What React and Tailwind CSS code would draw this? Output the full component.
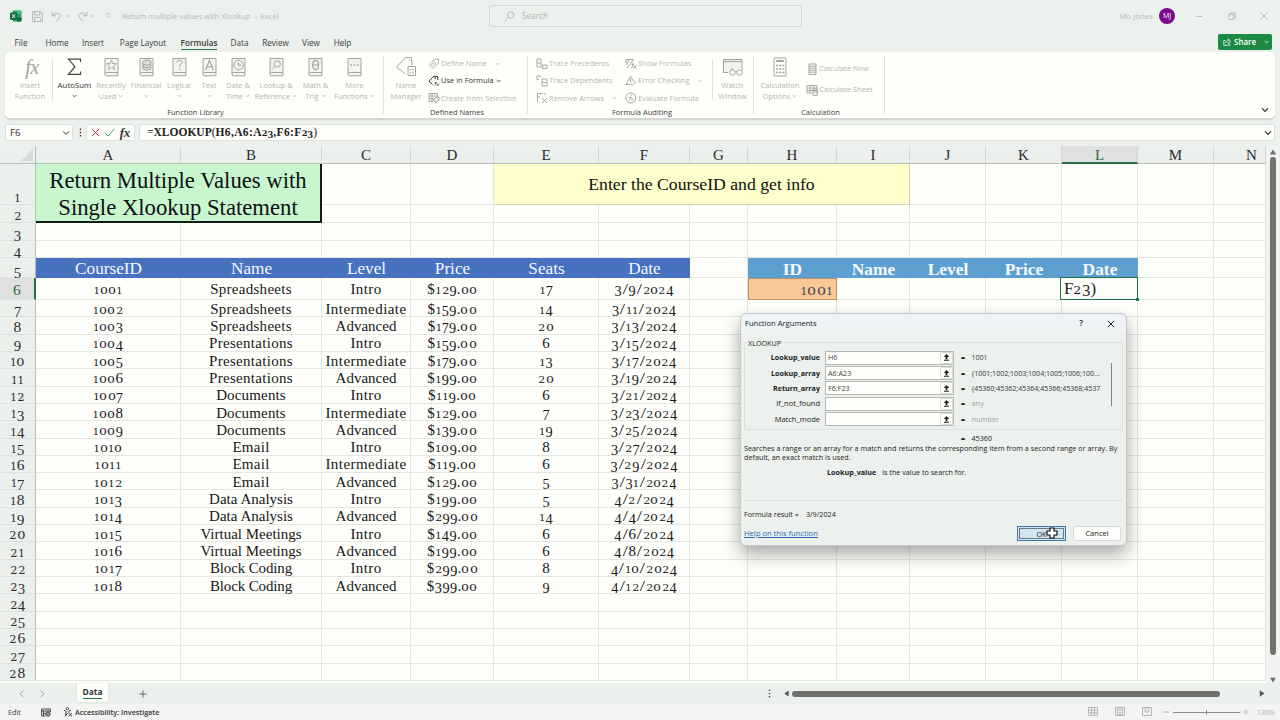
import React from "react";

const SERIF = "font-['Liberation_Serif',serif]";

/* ---------- old-style figures ---------- */
const FIGURES = {
  0: "w-[0.82em] text-[0.67em] scale-x-[1.25] font-['DejaVu_Serif',serif]",
  1: "w-[0.62em] text-[0.67em] font-['DejaVu_Serif',serif]",
  2: "w-[0.76em] text-[0.67em] scale-x-[1.1] font-['DejaVu_Serif',serif]",
  3: "w-[0.52em] text-[0.95em] align-[-0.17em]",
  4: "w-[0.54em] text-[0.95em] align-[-0.17em]",
  5: "w-[0.51em] text-[0.95em] align-[-0.17em]",
  6: "w-[0.53em]",
  7: "w-[0.49em] text-[0.95em] align-[-0.17em]",
  8: "w-[0.55em]",
  9: "w-[0.54em] text-[0.95em] align-[-0.17em]",
  "/": "w-[0.44em] scale-x-[1.25]",
  $: "w-[0.56em]",
};

function Old({ children }) {
  return (
    <span className="whitespace-pre">
      {String(children)
        .split("")
        .map((c, i) =>
          FIGURES[c] ? (
            <span key={i} className={"inline-block text-center leading-[0] " + FIGURES[c]}>
              {c}
            </span>
          ) : (
            c
          )
        )}
    </span>
  );
}

/* ---------- icons ---------- */
function Svg({ w, h, box, children, className = "" }) {
  return (
    <svg
      width={w}
      height={h}
      viewBox={box || `0 0 ${w} ${h}`}
      fill="none"
      stroke="currentColor"
      strokeWidth="1"
      className={"shrink-0 " + className}
    >
      {children}
    </svg>
  );
}

const Chev = ({ className = "" }) => (
  <Svg w={5} h={4} className={className}>
    <path d="M0.7 1 L2.5 2.8 L4.3 1" strokeWidth="0.9" />
  </Svg>
);

const Book = ({ children }) => (
  <Svg w={15} h={20}>
    <path d="M1 17 V1.5 H14 V15.5 H2.5 Q1 15.5 1 17 Q1 18.8 2.5 18.8 H14 V15.5" fill="#f3f3f1" />
    {children}
  </Svg>
);

const Tag = () => (
  <Svg w={12} h={12}>
    <path d="M1 6.5 L6.5 1.5 L10.5 1 L10.5 5 L5 10.5 Z M3 7 L7 3.3 M4.5 8.3 L8.3 4.7" strokeWidth="0.9" />
  </Svg>
);

/* ---------- ribbon pieces ---------- */
function Big({ w, icon, a, b, chev, dark }) {
  return (
    <div className={`flex h-[50px] flex-col items-center ${w} ${dark ? "text-[#333]" : "text-[#b4b5b1]"}`}>
      <div className={`flex h-[22px] items-center justify-center ${dark ? "text-[#444]" : "text-[#a3a4a1]"}`}>{icon}</div>
      <span className="mt-[2px] h-[10.5px] whitespace-nowrap leading-[11px]">{a}</span>
      <span className="flex h-[11px] items-center gap-[2px] whitespace-nowrap leading-[11px]">
        {b}
        {chev && <Chev />}
      </span>
    </div>
  );
}

function Small({ icon, children, chev, gap = "ml-[2px]", dark }) {
  return (
    <div className={`flex h-[17.4px] items-center whitespace-nowrap ${dark ? "text-[#333]" : "text-[#b4b5b1]"}`}>
      <span className={`flex w-[13px] ${dark ? "" : "text-[#a8a9a5]"}`}>{icon}</span>
      {children}
      {chev && <Chev className={gap} />}
    </div>
  );
}

function Group({ w, label, children }) {
  return (
    <div className={`relative flex shrink-0 flex-col ${w}`}>
      <div className="flex h-[55px] pt-[4px]">{children}</div>
      <div className="pl-[2px] text-center leading-[11px] text-[#3c3c3c]">{label}</div>
      <div className="absolute right-0 top-[4px] h-[58px] w-px bg-[#dfe1dd]" />
    </div>
  );
}

const Rule = () => <div className="mt-[3px] h-[41px] w-px bg-[#dfe1dd]" />;

function Ribbon() {
  return (
    <div className="ml-[5px] mr-[5px] flex h-[67px] shrink-0 rounded-[5px] border-b border-[#d3d6d2] bg-[#fefffb] text-[7.5px] shadow-[0_1px_1px_rgba(0,0,0,0.12)]">
      <Group w="w-[379px]" label="Function Library">
        <Big
          w="w-[47px] pl-[3px]"
          icon={<span className={`${SERIF} pl-1 text-[20px] italic leading-[20px] tracking-tight`}>fx</span>}
          a="Insert"
          b="Function"
        />
        <Rule />
        <Big
          w="ml-[3px] w-[37px]"
          dark
          icon={
            <Svg w={15} h={20}>
              <path d="M13.5 5 V2.2 H1.5 L8 9.7 L1.5 17.3 H13.5 V14.5" strokeWidth="1.2" />
            </Svg>
          }
          a={<span className="text-[7.9px]">AutoSum</span>}
          chev
        />
        <Big w="w-[36px]" icon={<Book><path d="M7.5 3 L8.8 6.5 L12.5 6.7 L9.6 9 L10.7 12.6 L7.5 10.5 L4.4 12.6 L5.5 9 L2.6 6.7 L6.3 6.5 Z" strokeWidth="0.9" /></Book>} a="Recently" b="Used" chev />
        <Big w="w-[34px]" icon={<Book><ellipse cx="7.8" cy="4.6" rx="4" ry="1.5" fill="#d4d4d1" /><path d="M3.8 4.4 V12 Q7.8 14.5 11.8 12 V4.4 M3.8 7 Q7.8 9.5 11.8 7 M3.8 9.6 Q7.8 12 11.8 9.6" fill="#dededb" /></Book>} a="Financial" chev />
        <Big w="w-[32px]" icon={<Book><path d="M5 5.5 Q5.2 3.2 7.6 3.2 Q10.2 3.3 10 5.5 Q9.8 7 7.7 8.3 V10.2 M7.7 11.6 V13" /></Book>} a="Logical" chev />
        <Big w="w-[28px]" icon={<Book><path d="M3.6 13 L7.5 3.3 L11.4 13 M5 9.7 H10" strokeWidth="1.1" /></Book>} a="Text" chev />
        <Big w="w-[30px]" icon={<Book><circle cx="7.6" cy="8" r="4.8" /><path d="M7.3 5 V8.2 H10.3" /></Book>} a="Date &amp;" b="Time" chev />
        <Big w="w-[46px]" icon={<Book><circle cx="8.2" cy="7" r="3.2" /><path d="M6 9.4 L2.8 12.6" /></Book>} a="Lookup &amp;" b="Reference" chev />
        <Big w="w-[33px]" icon={<Book><ellipse cx="7.6" cy="8" rx="2.9" ry="4.6" strokeWidth="1.2" /><path d="M4.9 8 H10.3" strokeWidth="1.1" /></Book>} a="Math &amp;" b="Trig" chev />
        <Big w="w-[45px]" icon={<Book><path d="M3.4 8 h1.6 M6.8 8 h1.6 M10.2 8 h1.6" strokeWidth="1.6" /></Book>} a="More" b="Functions" chev />
      </Group>
      <Group w="w-[144px]" label="Defined Names">
        <Big
          w="w-[44px]"
          icon={
            <Svg w={22} h={22}>
              <path d="M10.5 18 L1.5 11 L10.5 1.5 L16.5 1.5 L17 9" />
              <path d="M14 4 h1" />
              <path d="M13 10.5 h7.5 v9 h-7.5 z M14.5 13.5 h1.5 m1 0 h2 M14.5 16.8 h1.5 m1 0 h2" fill="#fff" />
            </Svg>
          }
          a="Name"
          b="Manager"
        />
        <div className="-mt-[1px] flex flex-col">
          <Small icon={<Tag />} chev gap="ml-[8px]">Define Name</Small>
          <Small dark chev icon={
            <Svg w={12} h={12}>
              <path d="M4.5 9.5 L1 6.2 L5.8 1.2 L9.5 1.5 L9.8 5" />
              <path d="M7.2 1.8 V4" />
              <path d="M6.5 10.5 Q7.5 10.5 8 7 M6.8 7.8 H9 M9 8.5 L11 10.8 M11 8.5 L9 10.8" strokeWidth="0.7" />
            </Svg>
          }>Use in Formula</Small>
          <Small icon={
            <Svg w={12} h={12}>
              <path d="M1 1.5 H9.5 V5 M1 1.5 V9.5 H5 M1 4 H9.5 M1 6.7 H6 M4 1.5 V9" />
              <path d="M5 8 L8 5 H11 V8 L8 11 Z" fill="#e8e8e5" />
            </Svg>
          }>Create from Selection</Small>
        </div>
      </Group>
      <Group w="w-[226px]" label="Formula Auditing">
        <div className="-mt-[1px] ml-[8px] flex w-[89px] flex-col">
          <Small icon={<Svg w={12} h={12}><path d="M1 1 H5 V9 H1 Z M1 5 H5 M6.5 7 H11 V10.5 H6.5 Z" /></Svg>}>Trace Precedents</Small>
          <Small icon={<Svg w={12} h={12}><path d="M1 4.5 V1 H5.5 M1 4.5 H3 M6 4 H11 V11 H6 Z M6 7.5 H11" /></Svg>}>Trace Dependents</Small>
          <Small chev gap="ml-[8px]" icon={<Svg w={12} h={12}><path d="M1.5 10 V1.5 H7 M1.5 5 H4 M8 1 L10 3 M6 6 L11 11 M11 6 L6 11" /></Svg>}>Remove Arrows</Small>
        </div>
        <div className="-mt-[1px] flex w-[87px] flex-col">
          <Small icon={<Svg w={12} h={12}><path d="M1 5 V1.5 H8.5 L2 10 M4 2 L1.5 7 M6 10.5 Q7.8 10 8.3 4.5 M6.5 6.5 H9 M8.7 7.5 L11.3 10.5 M11.3 7.5 L8.7 10.5" /></Svg>}>Show Formulas</Small>
          <Small chev gap="ml-[8px]" icon={<Svg w={12} h={12}><path d="M1 9.5 L5.5 1.2 L9 7 M1 9.5 H5 M5.5 4 V7.5" /><path d="M5.5 8.5 L7.3 10.5 L11 6.5" /></Svg>}>Error Checking</Small>
          <Small icon={<Svg w={12} h={12}><circle cx="5.8" cy="6" r="5" /><path d="M3.2 9 Q5 8.5 5.3 5 Q5.5 3 7 3 M4 5.5 H6.5 M6 6.3 L8.6 8.6 M8.6 6.3 L6 8.6" strokeWidth="0.8" /></Svg>}>Evaluate Formula</Small>
        </div>
        <Rule />
        <Big
          w="w-[39px]"
          icon={
            <Svg w={22} h={20}>
              <path d="M6 15.5 H1.5 V2.5 H20 V11" fill="#f1f1ee" />
              <path d="M1.5 4.6 H20" />
              <circle cx="10.5" cy="15.5" r="2.7" fill="#fff" />
              <circle cx="17.5" cy="15.5" r="2.7" fill="#fff" />
              <path d="M13 14.8 H15 M8.5 13.5 L10.5 11 M19.5 13.5 L20.5 11" />
            </Svg>
          }
          a="Watch"
          b="Window"
        />
      </Group>
      <Group w="w-[131px]" label="Calculation">
        <Big
          w="ml-[3px] w-[46px]"
          icon={
            <Svg w={14} h={20}>
              <path d="M1 1 H13 V19 H1 Z" />
              <path d="M3.2 4 H10.8" strokeWidth="2" />
              <path d="M3 8.5 h2 m1.2 0 h2 m1.2 0 h2 M3 12 h2 m1.2 0 h2 m1.2 0 h2 M3 15.5 h2 m1.2 0 h2 m1.2 0 h2" strokeWidth="1.6" />
            </Svg>
          }
          a="Calculation"
          b="Options"
          chev
        />
        <div className="ml-[3px] mt-[4px] flex flex-col gap-[4px]">
          <Small icon={<Svg w={12} h={12}><path d="M3 1 H10 V11.5 H3 Z M3 3.2 H10 M3 5.2 H10 M3 7.2 H10 M3 9.2 H10" /></Svg>}>Calculate Now</Small>
          <Small icon={<Svg w={12} h={12}><path d="M1 1.5 H11 V9 M1 1.5 V9 H6 M1 4 H11 M1 6.5 H11 M4 1.5 V9 M7.5 1.5 V5 M7 5 H11.3 V11.3 H7 Z M7 8 H11" /></Svg>}>Calculate Sheet</Small>
        </div>
      </Group>
      <div className="flex flex-1 items-end justify-end pb-[5px] pr-[6px] text-[#333]">
        <Svg w={8} h={6}><path d="M1 1.3 L4 4.3 L7 1.3" strokeWidth="1.2" /></Svg>
      </div>
    </div>
  );
}

/* ---------- title bar and tabs ---------- */
function TitleBar() {
  return (
    <div className="flex h-[32px] shrink-0 items-center text-[7.9px] text-[#b5bab6]">
      <svg width="12" height="12" viewBox="0 0 12 12" className="ml-[10px] shrink-0">
        <rect x="2.5" y="0.5" width="9" height="11" rx="1" fill="#21a366" />
        <path d="M7 0.5 H10.5 Q11.5 0.5 11.5 1.5 V4 H7 Z" fill="#4ac386" />
        <path d="M7 7.5 H11.5 V10.5 Q11.5 11.5 10.5 11.5 H7 Z" fill="#0f6b3c" />
        <rect x="0" y="2.5" width="7.2" height="7.2" rx="0.8" fill="#0c6a37" />
        <path d="M2 4.2 L5.2 8 M5.2 4.2 L2 8" stroke="#fff" strokeWidth="1" />
      </svg>
      <Svg w={11} h={11} className="ml-[10px]">
        <path d="M0.6 0.6 H9 L10.4 2 V10.4 H0.6 Z M2.6 0.6 V4 H8 V0.6 M2.6 10.4 V6.4 H8.4 V10.4" />
      </Svg>
      <Svg w={11} h={11} className="ml-[8px]">
        <path d="M1.2 0.8 V4.8 H5.2 M1.4 4.6 Q5 0.8 8 2.4 Q11 4.8 8 7.6 L5.2 10.2" />
      </Svg>
      <Chev className="ml-[3px]" />
      <Svg w={11} h={11} className="ml-[7px]">
        <path d="M9.8 0.8 V4.8 H5.8 M9.6 4.6 Q6 0.8 3 2.4 Q0 4.8 3 7.6 L5.8 10.2" />
      </Svg>
      <Chev className="ml-[2px]" />
      <Svg w={5} h={6} className="ml-[11px]">
        <path d="M0.5 1 H4.5 M0.7 3 L2.5 4.8 L4.3 3" strokeWidth="0.9" />
      </Svg>
      <span className="ml-[11px] w-[367px] whitespace-pre pt-[1px] text-[7.65px]">Return multiple values with Xlookup  -  Excel</span>
      <div className="flex h-[22px] w-[313px] shrink-0 items-center rounded-[2px] border border-[#d3d8d4] bg-[#ecf1ed] pl-[14px]">
        <Svg w={11} h={11}><circle cx="6.7" cy="4" r="3.2" /><path d="M4.4 6.4 L0.7 10" /></Svg>
        <span className="ml-[7px] pt-[1px] text-[8.2px]">Search</span>
      </div>
      <span className="ml-auto whitespace-nowrap pt-[1px]">Mo Jones</span>
      <span className="ml-[6px] flex h-[16px] w-[16px] items-center justify-center rounded-full bg-[#7a0a8c] text-[7px] text-white">MJ</span>
      <Svg w={7} h={7} className="ml-[21px]"><path d="M0.5 3.5 H6" /></Svg>
      <Svg w={8} h={8} className="ml-[25px]"><path d="M0.8 2.4 H5.8 V7.4 H0.8 Z M2.4 2.2 V0.8 H7.3 V5.7 H6" strokeWidth="0.9" /></Svg>
      <Svg w={8} h={8} className="ml-[24px] mr-[12px]"><path d="M0.7 0.7 L7.3 7.3 M7.3 0.7 L0.7 7.3" strokeWidth="0.9" /></Svg>
    </div>
  );
}

const TABS = [
  ["File", "w-[42px]"],
  ["Home", "w-[30px]"],
  ["Insert", "w-[42px]"],
  ["Page Layout", "w-[58px]"],
  ["Formulas", "w-[54px]"],
  ["Data", "w-[27px]"],
  ["Review", "w-[45px]"],
  ["View", "w-[26px]"],
  ["Help", "w-[37px]"],
];

function Tabs() {
  return (
    <div className="flex h-[20px] shrink-0 text-[8.2px] text-[#3a3c3a]">
      {TABS.map(([t, w]) => (
        <div key={t} className={`flex shrink-0 justify-center ${w}`}>
          <span
            className={
              "h-[18px] whitespace-nowrap leading-[21px] " +
              (t === "Formulas" ? "border-b-[1.5px] border-[#217346] font-semibold" : "")
            }
          >
            {t}
          </span>
        </div>
      ))}
      <div className="ml-auto mr-[8px] mt-[2px] flex h-[16px] w-[54px] items-center rounded-[2px] bg-[#1c8a43] pl-[5px] text-white">
        <Svg w={8} h={8}><path d="M2.5 2.5 H0.8 V7.3 H6.8 V5.6 M2.6 5.2 Q3 2.6 5.3 2.6 V0.9 L7.5 3.4 L5.3 5.6 V4.2" strokeWidth="0.8" /></Svg>
        <span className="ml-[3px] text-[8px] font-semibold">Share</span>
        <Chev className="ml-auto mr-[3px]" />
      </div>
    </div>
  );
}

function FormulaBar() {
  const box = "flex h-[17px] items-center rounded-[3px] border border-[#dde1dd] bg-[#fefffb]";
  return (
    <div className="ml-[5px] mr-[5px] mt-[5px] flex h-[17px] shrink-0 items-center text-[#333]">
      <div className={`${box} w-[68px] justify-between pl-[4px] pr-[2px] pt-[1px] text-[9.8px]`}>
        F6
        <Svg w={8} h={6}><path d="M1 1.3 L4 4.3 L7 1.3" /></Svg>
      </div>
      <Svg w={3} h={9} className="ml-[6px]"><path d="M1.5 0.5 v1.5 M1.5 3.7 v1.5 M1.5 7 v1.5" strokeWidth="1.4" /></Svg>
      <div className={`${box} ml-[4px] w-[49px] justify-between px-[4px]`}>
        <Svg w={9} h={9} className="text-[#c8304a]"><path d="M0.8 0.8 L8.2 8.2 M8.2 0.8 L0.8 8.2" /></Svg>
        <Svg w={11} h={9} className="text-[#3f8f52]"><path d="M0.8 5 L4 8 L10.3 1" /></Svg>
        <span className={`${SERIF} text-[13px] font-bold italic leading-[14px] tracking-tight`}>fx</span>
      </div>
      <div className={`${box} ml-[4px] flex-1 justify-between pl-[7px] pr-[2px]`}>
        <span className={`${SERIF} pt-[1px] text-[11.5px] text-[#222]`}>
          =<b><Old>XLOOKUP</Old></b>(<b className="tracking-[0.36px]"><Old>H6,A6:A23,F6:F23</Old></b>)
        </span>
        <Svg w={8} h={6}><path d="M1 1.3 L4 4.3 L7 1.3" strokeWidth="1.2" /></Svg>
      </div>
    </div>
  );
}

/* ---------- sheet ---------- */
const COLS = "ABCDEFGHIJKLMN".split("");
const ROWS = [
  ["1001", "Spreadsheets", "Intro", "$129.00", "17", "3/9/2024"],
  ["1002", "Spreadsheets", "Intermediate", "$159.00", "14", "3/11/2024"],
  ["1003", "Spreadsheets", "Advanced", "$179.00", "20", "3/13/2024"],
  ["1004", "Presentations", "Intro", "$159.00", "6", "3/15/2024"],
  ["1005", "Presentations", "Intermediate", "$179.00", "13", "3/17/2024"],
  ["1006", "Presentations", "Advanced", "$199.00", "20", "3/19/2024"],
  ["1007", "Documents", "Intro", "$119.00", "6", "3/21/2024"],
  ["1008", "Documents", "Intermediate", "$129.00", "7", "3/23/2024"],
  ["1009", "Documents", "Advanced", "$139.00", "19", "3/25/2024"],
  ["1010", "Email", "Intro", "$109.00", "8", "3/27/2024"],
  ["1011", "Email", "Intermediate", "$119.00", "6", "3/29/2024"],
  ["1012", "Email", "Advanced", "$129.00", "5", "3/31/2024"],
  ["1013", "Data Analysis", "Intro", "$199.00", "5", "4/2/2024"],
  ["1014", "Data Analysis", "Advanced", "$299.00", "14", "4/4/2024"],
  ["1015", "Virtual Meetings", "Intro", "$149.00", "6", "4/6/2024"],
  ["1016", "Virtual Meetings", "Advanced", "$199.00", "6", "4/8/2024"],
  ["1017", "Block Coding", "Intro", "$299.00", "8", "4/10/2024"],
  ["1018", "Block Coding", "Advanced", "$399.00", "9", "4/12/2024"],
];
const HEAD = ["CourseID", "Name", "Level", "Price", "Seats", "Date"];
const RESULT = ["ID", "Name", "Level", "Price", "Date"];
const TRACKING = {
  Spreadsheets: "tracking-[0.27px]",
  Presentations: "tracking-[0.3px]",
  Intermediate: "tracking-[0.44px]",
  Documents: "tracking-[0.15px]",
  Email: "tracking-[0.25px]",
  Intro: "tracking-[0.4px]",
  "Block Coding": "tracking-[-0.15px]",
};

function cellText(r, c) {
  if (r >= 6 && r <= 23 && c <= 6) return ROWS[r - 6][c - 1];
  return "";
}

function Cell({ r, c, rs = 1, cs = 1, className, children }) {
  return (
    <div
      className={"flex min-w-0 whitespace-nowrap " + className}
      style={{ gridRow: `${r + 1} / span ${rs}`, gridColumn: `${c + 1} / span ${cs}` }}
    >
      {children}
    </div>
  );
}

function Sheet() {
  const body = [];
  for (let r = 1; r <= 28; r++) {
    for (let c = 1; c <= 14; c++) {
      if ((r <= 2 && c <= 2) || (r === 1 && c >= 5 && c <= 9)) continue;
      if (r === 5 && (c <= 6 || (c >= 8 && c <= 12))) continue;
      if (r === 6 && (c === 8 || c === 12)) continue;
      const text = cellText(r, c);
      body.push(
        <Cell
          key={`${r}-${c}`}
          r={r}
          c={c}
          className={
            "items-center justify-center border-b border-r border-[#e3e6e1] pt-[2px] text-[15px] leading-[15px] text-[#161616] " +
            (TRACKING[text] || "")
          }
        >
          {text && <Old>{text}</Old>}
        </Cell>
      );
    }
  }
  return (
    <div
      className={`${SERIF} grid h-[537px] w-[1266px] shrink-0 grid-cols-[36px_145px_141px_89px_83px_105px_91px_58px_89px_73px_76px_76px_76px_76px_52px] grid-rows-[18px_41px_18px_18px_17px_20px_22px_repeat(22,17.32px)] overflow-hidden bg-[#fefffb]`}
    >
      <div className="flex items-end justify-end border-b border-r border-[#b9bdb9] bg-[#ecf0ec] pb-[2px] pr-[2px]">
        <svg width="12" height="12" viewBox="0 0 12 12"><path d="M12 0 V12 H0 Z" fill="#d6dad6" /></svg>
      </div>
      {COLS.map((c, i) => (
        <Cell
          key={c}
          r={0}
          c={i + 1}
          className={
            "items-center justify-center pt-[1px] text-[15px] leading-[16px] border-r border-r-[#d3d7d3] " +
            (c === "L"
              ? "border-b-2 border-b-[#217346] bg-[#dfe0df] text-[#1e6b3c]"
              : "border-b border-b-[#b9bdb9] bg-[#ecf0ec] text-[#2c2c2c]") +
            (c === "N" ? " pl-[24px]" : "")
          }
        >
          {c}
        </Cell>
      ))}
      {Array.from({ length: 28 }, (_, i) => i + 1).map((r) => (
        <Cell
          key={r}
          r={r}
          c={0}
          className={
            "items-end justify-center text-[15.5px] leading-[14px] border-b border-b-[#dfe3df] " +
            (r === 6
              ? "border-r-2 border-r-[#217346] bg-[#dfe0df] pb-[2px] text-[#1e6b3c]"
              : "border-r border-r-[#b9bdb9] bg-[#ecf0ec] text-[#2c2c2c]")
          }
        >
          <Old>{r}</Old>
        </Cell>
      ))}
      {body}
      <Cell r={1} c={1} rs={2} cs={2} className="flex-col items-center justify-center border-b-2 border-r-2 border-[#151b15] bg-[#c8f6cf] pt-[2px] text-[22.7px] leading-[27px] text-[#101010]">
        <span>Return Multiple Values with</span>
        <span>Single Xlookup Statement</span>
      </Cell>
      <Cell r={1} c={5} cs={5} className="items-center justify-center border-b border-r border-[#cfd0b4] bg-[#feffcc] text-[17.7px] text-[#101010]">
        Enter the CourseID and get info
      </Cell>
      {HEAD.map((h, i) => (
        <Cell key={h} r={5} c={i + 1} className="items-center justify-center bg-[#4672c0] pt-[2px] text-[17.2px] leading-[20px] text-[#f4f8ff]">
          {h}
        </Cell>
      ))}
      {RESULT.map((h, i) => (
        <Cell key={h} r={5} c={i + 8} className="items-center justify-center bg-[#5d9fd1] pt-[1px] text-[17.4px] font-bold leading-[20px] text-[#f6fbff]">
          {h}
        </Cell>
      ))}
      <Cell r={6} c={8} className="items-center justify-end border border-[#b9906a] bg-[#f8c997] pr-[3px] pt-[1px] text-[17px] leading-[17px] text-[#41415c]">
        <Old>1001</Old>
      </Cell>
      <Cell r={6} c={12} className="relative -ml-[2px] -mt-px items-center border-[1.5px] border-[#217346] bg-[#fefffb] pl-[3px] text-[17px] leading-[18px] text-[#1d1d1d]">
        <Old>F23)</Old>
        <div className="absolute -bottom-[2px] -right-[2px] h-[3px] w-[3px] bg-[#217346]" />
      </Cell>
    </div>
  );
}

function SheetArea() {
  return (
    <div className="mt-[5px] flex h-[537px] shrink-0">
      <Sheet />
      <div className="flex flex-1 flex-col items-center bg-[#f1f3f0]">
        <svg width="8" height="6" viewBox="0 0 8 6" className="mt-[3px]"><path d="M4 0.5 L7.2 5.5 H0.8 Z" fill="#6f716e" /></svg>
        <div className="mt-[2px] h-[498px] w-[6px] rounded-full bg-[#70716d]" />
        <svg width="8" height="6" viewBox="0 0 8 6" className="mt-[22px]"><path d="M4 5.5 L7 0.8 H1 Z" fill="#6f716e" /></svg>
      </div>
    </div>
  );
}

function SheetTabs() {
  return (
    <div className="flex h-[21px] shrink-0 items-center bg-[#ebf0ec]">
      <Svg w={5} h={8} className="ml-[19px] text-[#a0a5a1]"><path d="M4.2 0.8 L1 4 L4.2 7.2" /></Svg>
      <Svg w={5} h={8} className="ml-[16px] text-[#a0a5a1]"><path d="M0.8 0.8 L4 4 L0.8 7.2" /></Svg>
      <div className="ml-[32px] flex h-[19px] w-[31px] justify-center self-start rounded-b-[3px] bg-[#fefffb] shadow-[0_0_2px_rgba(0,0,0,0.12)]">
        <span className="h-[16px] border-b-[1.5px] border-[#217346] text-[8.4px] font-bold leading-[18px] text-[#333]">Data</span>
      </div>
      <Svg w={8} h={8} className="ml-[31px] text-[#666]"><path d="M4 0.3 V7.7 M0.3 4 H7.7" /></Svg>
      <Svg w={3} h={9} className="ml-[621px] text-[#555]"><path d="M1.5 0.5 v1.5 M1.5 3.7 v1.5 M1.5 7 v1.5" strokeWidth="1.4" /></Svg>
      <svg width="5" height="7" viewBox="0 0 5 7" className="ml-[13px]"><path d="M0.3 3.5 L4.6 0.5 V6.5 Z" fill="#555" /></svg>
      <div className="ml-[3px] h-[6px] w-[428px] rounded-full bg-[#70716d]" />
      <svg width="6" height="7" viewBox="0 0 6 7" className="ml-[39px]"><path d="M5.5 3.5 L0.8 0.3 V6.7 Z" fill="#555" /></svg>
    </div>
  );
}

function StatusBar() {
  return (
    <div className="flex h-[16px] shrink-0 items-center bg-[#f3f3f2] text-[7.3px] text-[#444]">
      <span className="ml-[8px] w-[33px]">Edit</span>
      <Svg w={10} h={9}><path d="M0.6 1 H9.4 V4 M0.6 1 V8 H4.5 M0.6 3 H9 M2.5 3 V8 M2.5 5.5 H5" /><circle cx="7" cy="6" r="2.2" fill="#999" /></Svg>
      <Svg w={10} h={10} className="ml-[12px]"><circle cx="4.5" cy="1.7" r="1.1" /><path d="M0.8 3.2 L3.2 4.2 L2.4 9.2 L4.5 6.2 M8 3.2 L5.8 4.2 L6 5.5 M5.5 6 L9 9.3 M9 6 L5.5 9.3" /></Svg>
      <span className="ml-[2px] whitespace-nowrap text-[7.2px] font-semibold text-[#333]">Accessibility: Investigate</span>
      <div className="ml-auto flex items-center text-[#aeaeac]">
        <Svg w={10} h={9}><path d="M0.5 0.5 H9.5 V8.5 H0.5 Z M3.5 0.5 V8.5 M6.5 0.5 V8.5 M0.5 3.2 H9.5 M0.5 5.8 H9.5" strokeWidth="0.8" /></Svg>
        <Svg w={10} h={9} className="ml-[17px]"><path d="M0.5 0.5 H9.5 V8.5 H0.5 Z M2.5 2 H7.5 V7.5 H2.5 Z M4 3.5 H6 M4 5.5 H6" strokeWidth="0.9" /></Svg>
        <Svg w={10} h={9} className="ml-[17px]"><path d="M0.5 0.5 H9.5 V8.5 H0.5 Z M3.3 0.5 V5 H6.3 V0.5" strokeWidth="0.9" /></Svg>
        <Svg w={6} h={6} className="ml-[11px]"><path d="M0 3 H6" /></Svg>
        <Svg w={67} h={6} className="ml-[4px] text-[#8a8a88]"><path d="M0 3.5 H67 M33.5 1 V6" /></Svg>
        <Svg w={6} h={6} className="ml-[3px]"><path d="M0 3 H6 M3 0 V6" strokeWidth="0.8" /></Svg>
        <span className="ml-[8px] mr-[5px] text-[7.2px]">130%</span>
      </div>
    </div>
  );
}

/* ---------- dialog ---------- */
const ARGS = [
  ["Lookup_value", "H6", "1001", true],
  ["Lookup_array", "A6:A23", "{1001;1002;1003;1004;1005;1006;100...", true],
  ["Return_array", "F6:F23", "{45360;45362;45364;45366;45368;4537", true],
  ["If_not_found", "", "any", false],
  ["Match_mode", "", "number", false],
];

function Dialog() {
  return (
    <div className="absolute left-[740px] top-[313px] flex h-[233px] w-[387px] flex-col rounded-[6px] border border-[#c3c7c5] bg-[#edf1ed] bg-linear-to-b from-[#eef3f8] from-0% to-[#edf1ed] to-15% px-[3px] text-[7.2px] text-[#222] shadow-[0_8px_18px_rgba(0,0,0,0.35)]">
      <div className="flex h-[19px] items-center pl-[1px]">
        <span className="text-[7.6px]">Function Arguments</span>
        <span className="ml-auto text-[8.5px] font-semibold">?</span>
        <Svg w={8} h={8} className="ml-[24px] mr-[8px]"><path d="M0.8 0.8 L7.2 7.2 M7.2 0.8 L0.8 7.2" /></Svg>
      </div>
      <div className="relative mt-[9px] h-[88px] border border-[#dde1dd]">
        <span className="absolute -top-[6px] left-[2px] bg-[#edf1ed] px-px leading-[12px]">XLOOKUP</span>
        <div className="mt-[7px] flex flex-col">
          {ARGS.map(([name, value, result, bold]) => (
            <div key={name} className="flex h-[15.4px] items-center">
              <span className={"w-[75px] text-right " + (bold ? "font-bold" : "text-[7.5px]")}>{name}</span>
              <div className="ml-[5px] flex h-[14px] w-[129px] items-center justify-between border border-[#b5b9b5] bg-[#fefffb] pl-[2px]">
                <span className="text-[#444]">{value}</span>
                <span className="flex h-[12px] w-[13px] items-center justify-center rounded-[2px] border border-[#dadcd8]">
                  <svg width="7" height="7" viewBox="0 0 7 7"><path d="M3.5 0 L6.3 3 H4.4 V5.2 H2.6 V3 H0.7 Z M0.9 5.8 H6.1 V6.8 H0.9 Z" fill="#222" /></svg>
                </span>
              </div>
              <span className="ml-[7px] w-[10.5px] font-bold">=</span>
              <span className={"whitespace-nowrap " + (bold ? "text-[7.05px] text-[#2c3440]" : "text-[7.4px] text-[#9fa39f]")}>{result}</span>
            </div>
          ))}
        </div>
        <div className="absolute right-[10px] top-[20px] h-[43px] w-[1.5px] bg-[#808380]" />
      </div>
      <div className="flex h-[14px] items-center pl-[217px] pt-[2px]">
        <span className="w-[10.5px] font-bold">=</span>45360
      </div>
      <div className="whitespace-nowrap leading-[8.7px] tracking-[0.035px]">
        Searches a range or an array for a match and returns the corresponding item from a second range or array. By
        <br />
        default, an exact match is used.
      </div>
      <div className="mt-[6px] flex h-[10px] items-center pl-[83px]">
        <b>Lookup_value</b>
        <span className="ml-[6px]">is the value to search for.</span>
      </div>
      <div className="mt-[23px] border-t border-[#dde1dd]" />
      <div className="mt-[8px] flex h-[10px] items-center">
        Formula result =<span className="ml-[7px]">3/9/2024</span>
      </div>
      <div className="mt-[7px] flex h-[15px] items-center">
        <span className="text-[7.6px] text-[#2a6cb5] underline">Help on this function</span>
        <div className="relative ml-auto flex h-[15px] w-[49px] items-center justify-center border-[1.5px] border-[#3c78ac] bg-[#d3e3f0] outline outline-[0.5px] -outline-offset-[3px] outline-[#6c7d8a]">
          OK
          <svg width="12" height="12" viewBox="0 0 12 12" className="absolute left-[28px] top-0">
            <path d="M4 1 H8 V4 H11 V8 H8 V11 H4 V8 H1 V4 H4 Z" fill="#fff" stroke="#111" strokeWidth="1.2" />
          </svg>
        </div>
        <div className="ml-[7px] mr-[2px] flex h-[15px] w-[48px] items-center justify-center rounded-[2px] border border-[#d5d8d5] bg-[#fdfefb] text-[7.5px]">Cancel</div>
      </div>
    </div>
  );
}

export default function App() {
  return (
    <div className="relative flex h-[720px] w-[1280px] flex-col overflow-hidden bg-[#ecf1ed] font-['Open_Sans','Noto_Sans',sans-serif]">
      <TitleBar />
      <Tabs />
      <Ribbon />
      <FormulaBar />
      <SheetArea />
      <SheetTabs />
      <StatusBar />
      <Dialog />
    </div>
  );
}
